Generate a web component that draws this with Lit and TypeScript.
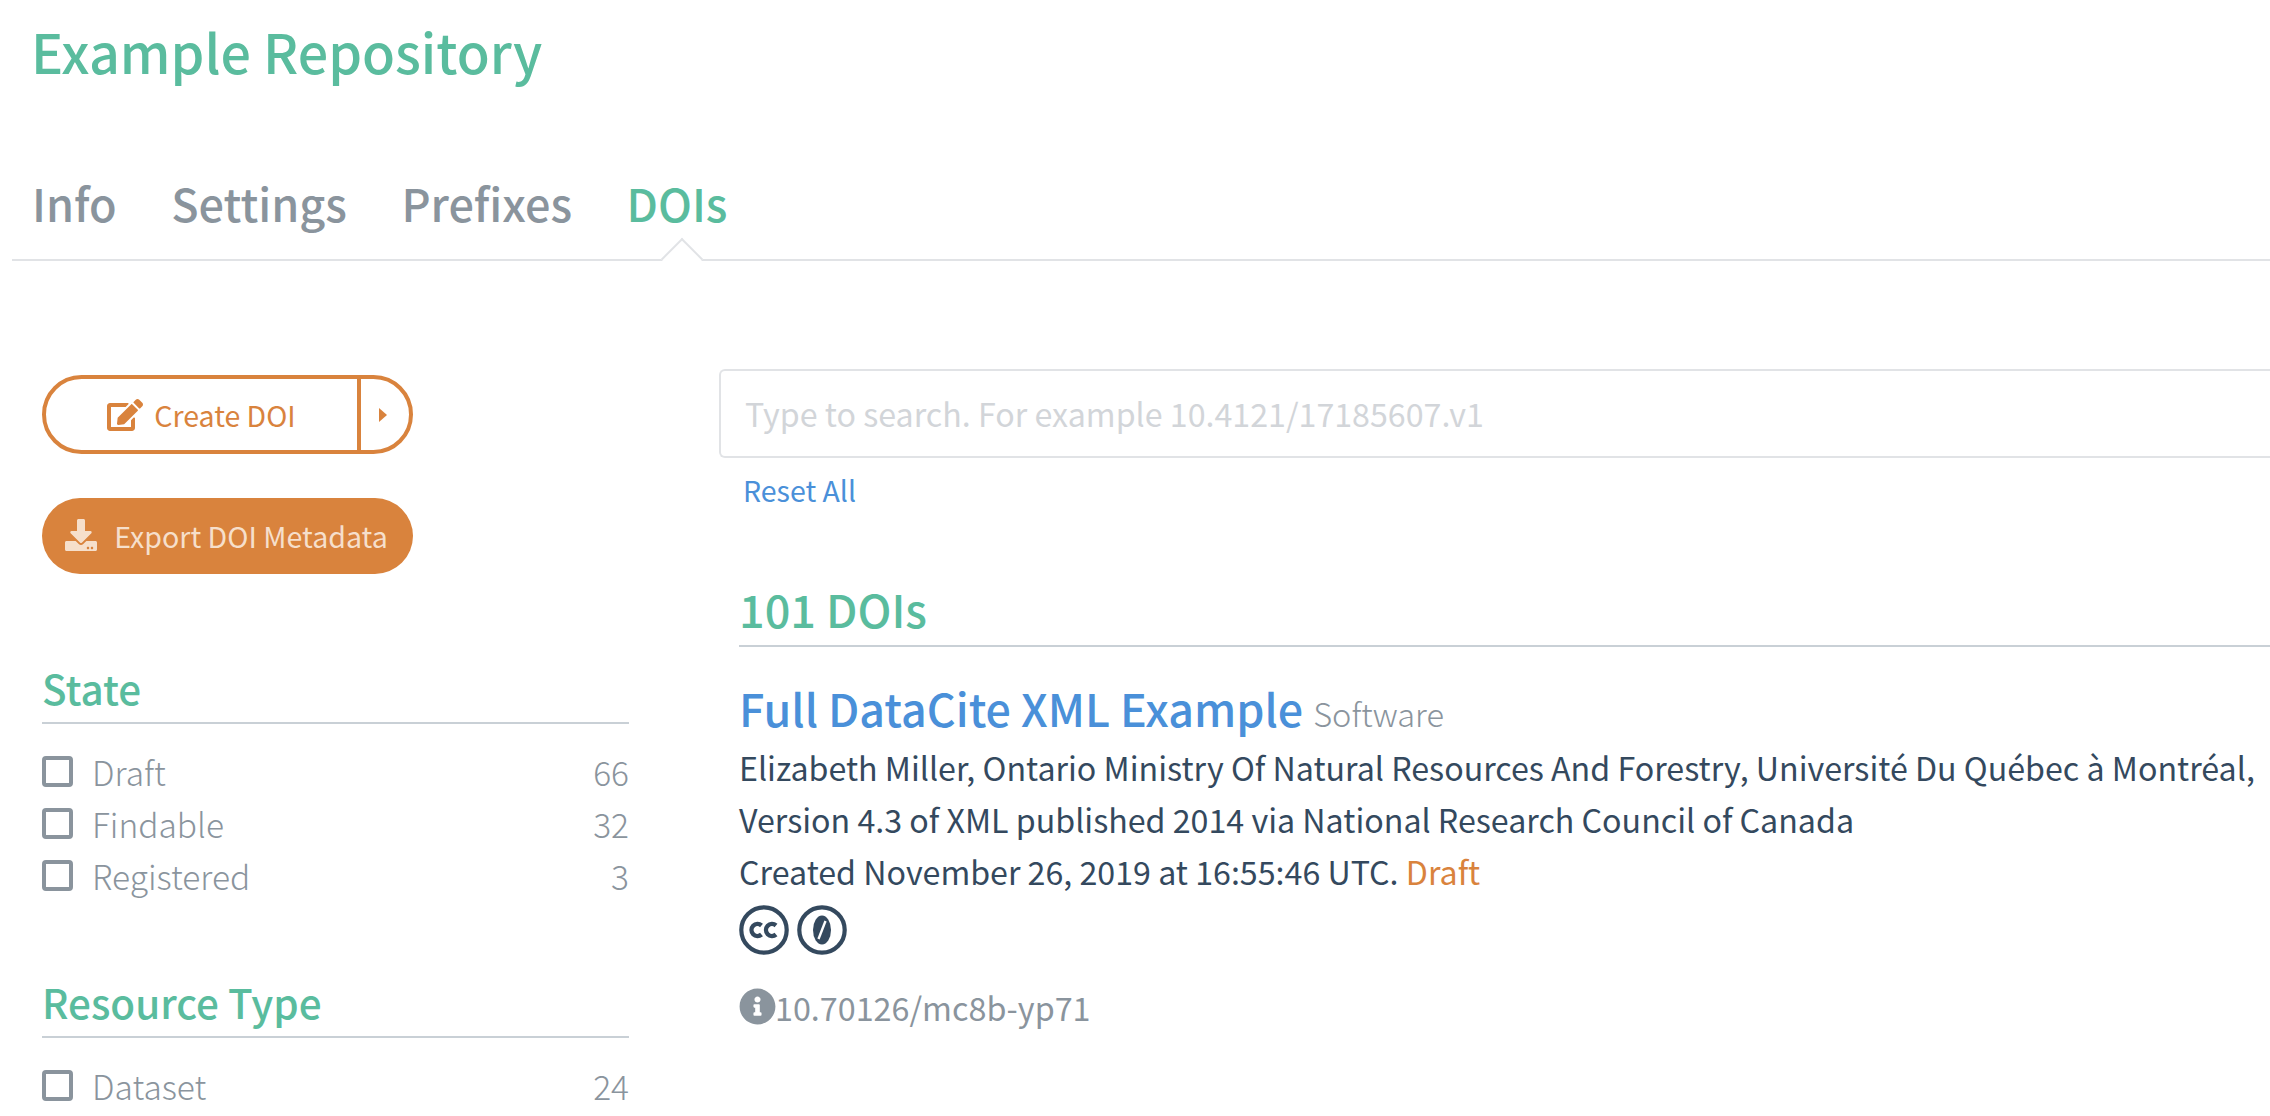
import { LitElement, html, css } from "lit";
import { customElement } from "lit/decorators.js";

const EDIT = "M402.6 83.2l90.2 90.2c3.8 3.8 3.8 10 0 13.8L274.4 405.6l-92.8 10.3c-12.4 1.4-22.9-9.1-21.5-21.5l10.3-92.8L388.8 83.2c3.8-3.8 10-3.8 13.8 0zm162-22.9l-48.8-48.8c-15.2-15.2-39.9-15.2-55.2 0l-35.4 35.4c-3.8 3.8-3.8 10 0 13.8l90.2 90.2c3.8 3.8 10 3.8 13.8 0l35.4-35.4c15.2-15.3 15.2-40 0-55.2zM384 346.2V448H64V128h229.8c3.2 0 6.2-1.3 8.5-3.5l40-40c7.6-7.6 2.2-20.5-8.5-20.5H48C21.5 64 0 85.5 0 112v352c0 26.5 21.5 48 48 48h352c26.5 0 48-21.5 48-48V306.2c0-10.7-12.9-16-20.5-8.5l-40 40c-2.2 2.3-3.5 5.3-3.5 8.5z";
const DOWNLOAD = "M216 0h80c13.3 0 24 10.7 24 24v168h87.7c17.8 0 26.7 21.5 14.1 34.1L269.7 378.3c-7.5 7.5-19.8 7.5-27.3 0L90.1 226.1c-12.6-12.6-3.7-34.1 14.1-34.1H192V24c0-13.3 10.7-24 24-24zm296 376v112c0 13.3-10.7 24-24 24H24c-13.3 0-24-10.7-24-24V376c0-13.3 10.7-24 24-24h146.7l49 49c20.1 20.1 52.5 20.1 72.6 0l49-49H488c13.3 0 24 10.7 24 24zm-124 88c0-11-9-20-20-20s-20 9-20 20 9 20 20 20 20-9 20-20zm64 0c0-11-9-20-20-20s-20 9-20 20 9 20 20 20 20-9 20-20z";
const INFO = "M256 8C119.043 8 8 119.083 8 256c0 136.997 111.043 248 248 248s248-111.003 248-248C504 119.083 392.957 8 256 8zm0 110c23.196 0 42 18.804 42 42s-18.804 42-42 42-42-18.804-42-42 18.804-42 42-42zm56 254c0 6.627-5.373 12-12 12h-88c-6.627 0-12-5.373-12-12v-24c0-6.627 5.373-12 12-12h12v-64h-12c-6.627 0-12-5.373-12-12v-24c0-6.627 5.373-12 12-12h64c6.627 0 12 5.373 12 12v100h12c6.627 0 12 5.373 12 12v24z";

@customElement("app-root")
export class AppRoot extends LitElement {
  static styles = css`
    :host {
      display: block;
      width: 2270px;
      height: 1116px;
      overflow: hidden;
      background: #fff;
      font-family: "Noto Sans CJK SC", "Lato", sans-serif;
      color: #34495e;
    }
    * { box-sizing: border-box; }
    .title {
      margin: 0;
      padding: 15px 0 0 31px;
      height: 180px;
      font-size: 53.8px;
      line-height: 72px;
      font-weight: 500;
      color: #5abc9e;
    }
    .tabs {
      position: relative;
      display: flex;
      gap: 54.5px;
      margin-left: 12px;
      padding-left: 20px;
      height: 81px;
      border-bottom: 2px solid #e1e3e6;
      font-size: 45px;
      line-height: 46px;
      font-weight: 500;
      color: #8a949d;
    }
    .tabs .on { color: #5abc9e; position: relative; }
    .notch {
      position: absolute;
      left: calc(50% - 10px);
      bottom: -15px;
      width: 30px;
      height: 30px;
      background: #fff;
      border-top: 2px solid #e1e3e6;
      border-left: 2px solid #e1e3e6;
      transform: rotate(45deg);
    }
    .body {
      display: grid;
      grid-template-columns: 587px 1fr;
      column-gap: 90px;
      padding: 108px 0 0 42px;
    }
    .side { padding-top: 6px; }
    .btn-split {
      display: flex;
      width: 371px;
      height: 79px;
      border: 4px solid #d9833d;
      border-radius: 40px;
      color: #d9833d;
      font-size: 28.5px;
    }
    .btn-main {
      width: 315px;
      display: flex;
      align-items: center;
      justify-content: center;
      gap: 11px;
      border-right: 4px solid #d9833d;
    }
    .btn-main svg { width: 36px; height: 32px; fill: #d9833d; }
    .btn-arrow { flex: 1; display: flex; align-items: center; justify-content: center; padding-right: 4px; }
    .btn-arrow i { border-left: 8px solid #d9833d; border-top: 7px solid transparent; border-bottom: 7px solid transparent; }
    .btn-fill {
      display: flex;
      align-items: center;
      justify-content: center;
      gap: 17px;
      margin-top: 44px;
      padding: 0 2px 2px 0;
      width: 371px;
      height: 76px;
      border-radius: 38px;
      background: #d9833d;
      color: #f6dfcb;
      font-size: 28.6px;
    }
    .btn-fill svg { width: 32px; height: 32px; fill: #f6dfcb; }
    .facet { margin-top: 89px; }
    .facet + .facet { margin-top: 76px; }
    .facet h3 {
      margin: 0;
      height: 61px;
      border-bottom: 2px solid #c9d0d6;
      font-size: 40.4px;
      line-height: 50px;
      font-weight: 500;
      color: #5abc9e;
    }
    .rows { padding-top: 21px; }
    .row {
      display: flex;
      align-items: center;
      height: 52px;
      font-size: 33.5px;
      font-weight: 300;
      color: #8a949d;
    }
    .box {
      width: 31px;
      height: 31px;
      border: 4px solid #8a949d;
      border-radius: 4px;
      margin-right: 19px;
    }
    .row .n { margin-left: auto; }
    .search {
      height: 89px;
      border: 2px solid #e1e3e6;
      border-right: none;
      border-radius: 6px 0 0 6px;
      padding-left: 24px;
      font-size: 32.2px;
      line-height: 84px;
      color: #d2d5d9;
      width: 1600px;
    }
    .reset {
      margin: 12px 0 0 24px;
      font-size: 28.5px;
      line-height: 40px;
      color: #4a90d9;
    }
    .results { margin-left: 20px; padding-top: 74px; }
    .count {
      height: 63px;
      border-bottom: 2px solid #c9d0d6;
      font-size: 45px;
      line-height: 50px;
      font-weight: 500;
      color: #5abc9e;
      width: 1600px;
    }
    .doi { padding-top: 33px; }
    .doi-title { font-size: 44.8px; line-height: 56px; font-weight: 500; color: #4a90d9; white-space: nowrap; }
    .doi-title span { font-size: 32.6px; font-weight: 300; color: #8a949d; }
    .line { font-size: 32.2px; line-height: 52px; white-space: nowrap; }
    .draft { color: #d9833d; }
    .cc { display: flex; gap: 8px; margin-top: 8px; }
    .cc svg { width: 50px; height: 50px; display: block; }
    .id {
      display: flex;
      align-items: center;
      margin-top: 33px;
      font-size: 32.3px;
      line-height: 36px;
      color: #8a949d;
    }
    .id svg { width: 37px; height: 37px; fill: #8a949d; margin-right: -1px; }
  `;

  private facet(title: string, rows: [string, number][]) {
    return html`<section class="facet">
      <h3>${title}</h3>
      <div class="rows">
        ${rows.map(([l, n]) => html`<div class="row"><span class="box"></span><span>${l}</span><span class="n">${n}</span></div>`)}
      </div>
    </section>`;
  }

  render() {
    return html`
      <h1 class="title">Example Repository</h1>
      <nav class="tabs">
        <span>Info</span><span>Settings</span><span>Prefixes</span>
        <span class="on">DOIs<span class="notch"></span></span>
      </nav>
      <div class="body">
        <aside class="side">
          <div class="btn-split">
            <div class="btn-main"><svg viewBox="0 0 576 512"><path d="${EDIT}"></path></svg>Create DOI</div>
            <div class="btn-arrow"><i></i></div>
          </div>
          <div class="btn-fill"><svg viewBox="0 0 512 512"><path d="${DOWNLOAD}"></path></svg>Export DOI Metadata</div>
          ${this.facet("State", [["Draft", 66], ["Findable", 32], ["Registered", 3]])}
          ${this.facet("Resource Type", [["Dataset", 24]])}
        </aside>
        <main>
          <div class="search">Type to search. For example 10.4121/17185607.v1</div>
          <div class="reset">Reset All</div>
          <div class="results">
            <div class="count">101 DOIs</div>
            <div class="doi">
              <div class="doi-title">Full DataCite XML Example <span>Software</span></div>
              <div class="line">Elizabeth Miller, Ontario Ministry Of Natural Resources And Forestry, Université Du Québec à Montréal,</div>
              <div class="line">Version 4.3 of XML published 2014 via National Research Council of Canada</div>
              <div class="line">Created November 26, 2019 at 16:55:46 UTC. <span class="draft">Draft</span></div>
              <div class="cc">
                <svg viewBox="0 0 50 50">
                  <circle cx="25" cy="25" r="22.7" fill="none" stroke="#34495e" stroke-width="4.2"></circle>
                  <path d="M22.5 20.5a6 6 0 1 0 0 9M37 20.5a6 6 0 1 0 0 9" fill="none" stroke="#34495e" stroke-width="4.4"></path>
                </svg>
                <svg viewBox="0 0 50 50">
                  <circle cx="25" cy="25" r="22.7" fill="none" stroke="#34495e" stroke-width="4.2"></circle>
                  <ellipse cx="25" cy="25" rx="9" ry="14.5" fill="#34495e"></ellipse>
                  <path d="M28.5 16L21.5 34" stroke="#fff" stroke-width="2.4"></path>
                </svg>
              </div>
              <div class="id"><svg viewBox="0 0 512 512"><path d="${INFO}"></path></svg>10.70126/mc8b-yp71</div>
            </div>
          </div>
        </main>
      </div>
    `;
  }
}
